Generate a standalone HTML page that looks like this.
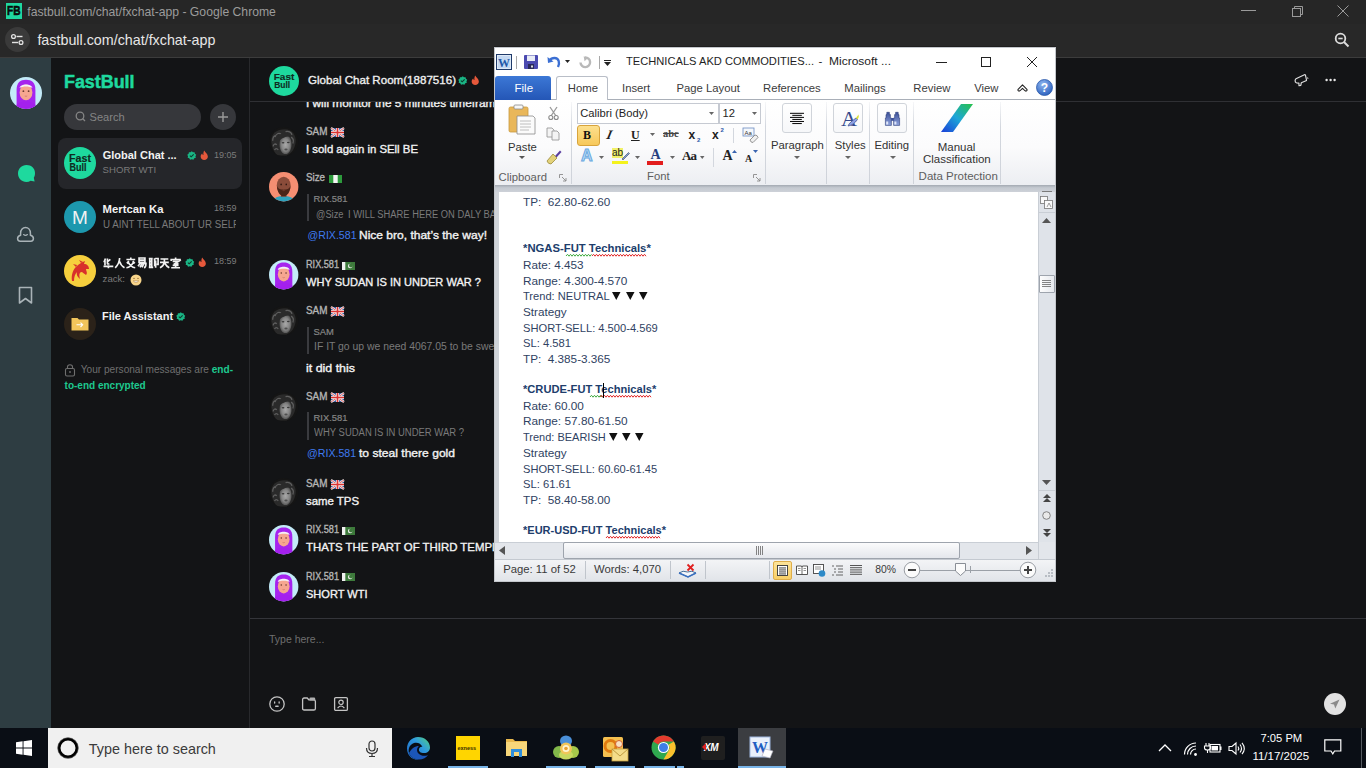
<!DOCTYPE html>
<html><head><meta charset="utf-8">
<style>
*{margin:0;padding:0;box-sizing:border-box}
html,body{width:1366px;height:768px;overflow:hidden;background:#131416;font-family:"Liberation Sans",sans-serif}
.a{position:absolute}
.t{position:absolute;white-space:nowrap;line-height:1}
svg.a{overflow:visible}
</style></head><body>
<div class="a" style="left:0px;top:0px;width:1366px;height:24px;background:#262626;"></div>
<div class="a" style="left:0px;top:24px;width:1366px;height:33px;background:#282828;"></div>
<div class="a" style="left:0px;top:57px;width:1366px;height:1px;background:#3c3c3c;"></div>
<div class="a" style="left:6px;top:3px;width:16px;height:16px;background:#1fd8a0;"></div>
<div class="t" style="left:7.00px;top:4.38px;font-size:13.5px;color:#0a0a0a;font-weight:bold;-webkit-text-stroke:0.6px #0a0a0a;transform:scaleX(0.7500);transform-origin:0 0;">FB</div>
<div class="t" style="left:27.30px;top:5.84px;font-size:12.2px;color:#9c9c9c;">fastbull.com/chat/fxchat-app - Google Chrome</div>
<div class="a" style="left:1241px;top:10px;width:15px;height:1px;background:#9a9a9a;"></div>
<svg class="a" style="left:1290px;top:4px;" width="14" height="14" viewBox="0 0 14 14"><rect x="2.5" y="4.5" width="8" height="8" fill="none" stroke="#9a9a9a"/><path d="M4.5 4.5 V2.5 H12.5 V10.5 H10.5" fill="none" stroke="#9a9a9a"/></svg>
<svg class="a" style="left:1336px;top:4px;" width="14" height="14" viewBox="0 0 14 14"><path d="M1.5 1.5 L12.5 12.5 M12.5 1.5 L1.5 12.5" stroke="#9a9a9a" stroke-width="1"/></svg>
<svg class="a" style="left:5px;top:27px;" width="25" height="25" viewBox="0 0 25 25"><circle cx="12.5" cy="12.5" r="12.5" fill="#3a3a3a"/><circle cx="8.5" cy="9.5" r="1.9" fill="none" stroke="#e3e3e3" stroke-width="1.3"/><path d="M11.5 9.5 H17.5" stroke="#e3e3e3" stroke-width="1.4"/><circle cx="16" cy="15.5" r="1.9" fill="none" stroke="#e3e3e3" stroke-width="1.3"/><path d="M7 15.5 H13" stroke="#e3e3e3" stroke-width="1.4"/></svg>
<div class="t" style="left:37.40px;top:33.28px;font-size:14.3px;color:#e6e6e6;">fastbull.com/chat/fxchat-app</div>
<svg class="a" style="left:1334px;top:32px;" width="16" height="16" viewBox="0 0 16 16"><circle cx="6.5" cy="6.5" r="4.8" fill="none" stroke="#dcdcdc" stroke-width="1.8"/><path d="M4.3 6.5 H8.7" stroke="#dcdcdc" stroke-width="1.6"/><path d="M10 10 L14.5 14.5" stroke="#dcdcdc" stroke-width="2"/></svg>
<div class="a" style="left:0px;top:58px;width:51px;height:670px;background:#2e3d42;"></div>
<svg class="a" style="left:10px;top:77px;" width="32" height="32" viewBox="0 0 32 32"><defs><clipPath id="cr"><circle cx="16" cy="16" r="16"/></clipPath></defs><circle cx="16" cy="16" r="16" fill="#c3ebf8"/><g clip-path="url(#cr)"><path d="M6.6 31 V13 C6.6 5.5 10.2 2.8 16 2.8 C21.8 2.8 25.4 5.5 25.4 13 V31 Z" fill="#a624ee"/><path d="M5 33 C5.5 27 9 24.5 16 24.5 C23 24.5 26.5 27 27 33 Z" fill="#a420ee"/><ellipse cx="16" cy="15.4" rx="6.4" ry="7.9" fill="#f6a690"/><path d="M9.6 11 C9.8 6.3 22.2 6.3 22.4 11 C19 9 13 9 9.6 11Z" fill="#f5eff5"/><circle cx="13.4" cy="14.2" r="0.9" fill="#6b3b30"/><circle cx="18.6" cy="14.2" r="0.9" fill="#6b3b30"/><path d="M14.8 19 Q16 19.6 17.2 19" stroke="#c06a5a" stroke-width="0.6" fill="none"/></g></svg>
<svg class="a" style="left:17px;top:164px;" width="19" height="19" viewBox="0 0 19 19"><path d="M9.5 1 C14.5 1 18 4.5 18 9 C18 11 17.6 12.5 16.8 13.8 L17.6 17.6 L13.6 16.8 C12.4 17.6 11 18 9.5 18 C4.5 18 1 14 1 9.5 C1 4.8 4.5 1 9.5 1Z" fill="#1ed99e"/></svg>
<svg class="a" style="left:16px;top:225px;" width="19" height="19" viewBox="0 0 19 19"><path d="M4.6 10.2 V8.2 C4.6 4.6 6.9 2.6 9.5 2.6 C12.1 2.6 14.4 4.6 14.4 8.2 V10.2 C16.4 10.6 17.4 12 17.4 13.6 C17.4 15.2 16.3 16.2 14.8 16.2 H4.2 C2.7 16.2 1.6 15.2 1.6 13.6 C1.6 12 2.6 10.6 4.6 10.2Z" fill="none" stroke="#a9b3b7" stroke-width="1.5" stroke-linejoin="round"/><path d="M7.6 9.6 Q9.5 11 11.4 9.6" fill="none" stroke="#a9b3b7" stroke-width="1.3" stroke-linecap="round"/></svg>
<svg class="a" style="left:17px;top:286px;" width="17" height="19" viewBox="0 0 17 19"><path d="M2.5 1.5 H14.5 V17 L8.5 12.5 L2.5 17 Z" fill="none" stroke="#a9b3b7" stroke-width="1.6" stroke-linejoin="round"/></svg>
<div class="a" style="left:51px;top:58px;width:198px;height:670px;background:#131416;"></div>
<div class="a" style="left:249px;top:58px;width:1px;height:670px;background:#28292c;"></div>
<div class="t" style="left:64.20px;top:74.19px;font-size:17.6px;color:#1ed99e;font-weight:bold;-webkit-text-stroke:0.5px #1ed99e;transform:scaleX(1.0158);transform-origin:0 0;">FastBull</div>
<div class="a" style="left:64px;top:104px;width:137px;height:26px;background:#36373b;border-radius:13px;"></div>
<svg class="a" style="left:75px;top:111px;" width="12" height="12" viewBox="0 0 12 12"><circle cx="5" cy="5" r="3.8" fill="none" stroke="#858585" stroke-width="1.3"/><path d="M7.8 7.8 L10 10" stroke="#858585" stroke-width="1.3"/></svg>
<div class="t" style="left:89.50px;top:111.67px;font-size:11.1px;color:#858585;">Search</div>
<div class="a" style="left:210px;top:104px;width:26px;height:26px;background:#36373b;border-radius:13px;"></div>
<svg class="a" style="left:216px;top:110px;" width="14" height="14" viewBox="0 0 14 14"><path d="M7 2 V12 M2 7 H12" stroke="#9a9a9a" stroke-width="1.4"/></svg>
<div class="a" style="left:58px;top:138px;width:184px;height:51px;background:#25262a;border-radius:8px;"></div>
<svg class="a" style="left:64px;top:147px;" width="32" height="32" viewBox="0 0 32 32"><circle cx="16" cy="16" r="16" fill="#1ed99e"/><text x="5" y="15.2" font-family="Liberation Sans" font-weight="bold" font-size="10.5" fill="#0f2a1f" textLength="22" lengthAdjust="spacingAndGlyphs" stroke="#0f2a1f" stroke-width="0.15">Fast</text><text x="5.5" y="23.8" font-family="Liberation Sans" font-weight="bold" font-size="10.5" fill="#0f2a1f" textLength="17" lengthAdjust="spacingAndGlyphs" stroke="#0f2a1f" stroke-width="0.15">Bull</text></svg>
<div class="t" style="left:102.70px;top:149.68px;font-size:11px;color:#f2f2f2;font-weight:bold;">Global Chat ...</div>
<svg class="a" style="left:187px;top:150.5px;" width="9.5" height="9.5" viewBox="0 0 10 10"><path d="M5 0.3 L6.3 1.4 L8 1.2 L8.3 2.9 L9.7 4 L8.9 5.5 L9.3 7.2 L7.6 7.6 L6.8 9.2 L5 8.6 L3.2 9.2 L2.4 7.6 L0.7 7.2 L1.1 5.5 L0.3 4 L1.7 2.9 L2 1.2 L3.7 1.4Z" fill="#1ab585"/><path d="M3 4.9 L4.4 6.2 L7 3.5" stroke="#0c3a2a" stroke-width="1.1" fill="none"/></svg>
<svg class="a" style="left:199.5px;top:150px;" width="8.5" height="10" viewBox="0 0 8 10"><path d="M4 0.5 C5 2.5 7.6 3.8 7.6 6.6 C7.6 8.6 6 10 4 10 C2 10 0.4 8.6 0.4 6.6 C0.4 5 1.2 4 2 3.4 C2.2 4.6 2.8 5 3.2 5 C3 3.5 3.2 1.8 4 0.5Z" fill="#e6583b"/></svg>
<div class="t" style="left:214.00px;top:150.92px;font-size:9px;color:#7c7c7c;">19:05</div>
<div class="t" style="left:102.60px;top:165.45px;font-size:9.6px;color:#7a7a7a;">SHORT WTI</div>
<svg class="a" style="left:64px;top:201px;" width="32" height="32" viewBox="0 0 32 32"><circle cx="16" cy="16" r="16" fill="#1d98ae"/><text x="16" y="23" text-anchor="middle" font-family="Liberation Sans" font-size="19" fill="#f2f2f2">M</text></svg>
<div class="t" style="left:102.60px;top:204.04px;font-size:11.3px;color:#f2f2f2;font-weight:bold;">Mertcan Ka</div>
<div class="t" style="left:214.00px;top:203.62px;font-size:9px;color:#7c7c7c;">18:59</div>
<div class="a" style="left:102px;top:218px;width:134px;height:14px;overflow:hidden"><div class="t" style="left:0.60px;top:1.60px;font-size:10px;color:#7a7a7a;transform:scaleX(0.9736);transform-origin:0 0;">U AINT TELL ABOUT UR SELF</div>
</div>
<svg class="a" style="left:64px;top:255px;" width="32" height="32" viewBox="0 0 32 32"><circle cx="16" cy="16" r="16" fill="#f6cf3d"/><path d="M8 26 C7 20 9 14 13 11 C15 9 18 7 21 6 L20 9 C23 9 25 11 25 14 L22 14 C22 16 24 18 22 20 C20 19 19 17 17 17 C15 18 15 21 16 24 C14 22 12 20 13 17 C11 19 10 22 10 26Z" fill="#d8312b"/><path d="M12 12 L9 9 L13 10Z M17 8 L15 5 L19 7Z" fill="#d8312b"/></svg>
<svg class="a" style="left:102.5px;top:257px;" width="86" height="12" viewBox="0 0 86 12"><path transform="translate(0.5,0.5) scale(0.98)" d="M2 1 L0.5 5 M1.5 3 V8 M4 1 V6 Q4 7 6 6.5 M7 2 L4.5 4 M0 9 H10 M5 8 V11" fill="none" stroke="#f2f2f2" stroke-width="1.7"/><path transform="translate(11.7,0.5) scale(0.98)" d="M5 0.5 Q5 6 0.5 10.5 M5 4 Q6 8 10 10.5" fill="none" stroke="#f2f2f2" stroke-width="1.7"/><path transform="translate(22.9,0.5) scale(0.98)" d="M5 0 V1.5 M0.5 2 H9.5 M3 3.5 L1 6 M7 3.5 L9 6 M2.5 5 Q5 10 9.5 10.5 M7.5 5 Q5 10 0.5 10.5" fill="none" stroke="#f2f2f2" stroke-width="1.7"/><path transform="translate(34.099999999999994,0.5) scale(0.98)" d="M2 0.5 H8 V5 H2Z M2 2.7 H8 M3 6 H9 Q9 10 7 10.5 M3 6 L1 9 M5 6 L3 10 M7 6 L5 10" fill="none" stroke="#f2f2f2" stroke-width="1.7"/><path transform="translate(45.3,0.5) scale(0.98)" d="M0.5 1 H4.5 M1.5 1 V10 M3.5 1 V10 M0.5 10 H5 M1.5 4 H3.5 M1.5 7 H3.5 M5.5 1.5 L6.5 1.5 V9 M7 1 H10 V7 H8.5 M7.5 3 V10.5" fill="none" stroke="#f2f2f2" stroke-width="1.7"/><path transform="translate(56.5,0.5) scale(0.98)" d="M1 1.5 H9 M0.5 5 H9.5 M5 1.5 V5 Q4 9 0.5 10.5 M5.5 6 Q7 9 10 10.5" fill="none" stroke="#f2f2f2" stroke-width="1.7"/><path transform="translate(67.69999999999999,0.5) scale(0.98)" d="M5 0 V1.5 M0.5 3.5 V2 H9.5 V3.5 M2 4 H8 L3 7 M6 6 L8 7 M2 8 H8 M5 6.5 V10.5 M0.5 10.5 H9.5" fill="none" stroke="#f2f2f2" stroke-width="1.7"/></svg>
<svg class="a" style="left:185px;top:257.5px;" width="9.5" height="9.5" viewBox="0 0 10 10"><path d="M5 0.3 L6.3 1.4 L8 1.2 L8.3 2.9 L9.7 4 L8.9 5.5 L9.3 7.2 L7.6 7.6 L6.8 9.2 L5 8.6 L3.2 9.2 L2.4 7.6 L0.7 7.2 L1.1 5.5 L0.3 4 L1.7 2.9 L2 1.2 L3.7 1.4Z" fill="#1ab585"/><path d="M3 4.9 L4.4 6.2 L7 3.5" stroke="#0c3a2a" stroke-width="1.1" fill="none"/></svg>
<svg class="a" style="left:197.5px;top:257px;" width="8.5" height="10" viewBox="0 0 8 10"><path d="M4 0.5 C5 2.5 7.6 3.8 7.6 6.6 C7.6 8.6 6 10 4 10 C2 10 0.4 8.6 0.4 6.6 C0.4 5 1.2 4 2 3.4 C2.2 4.6 2.8 5 3.2 5 C3 3.5 3.2 1.8 4 0.5Z" fill="#e6583b"/></svg>
<div class="t" style="left:214.00px;top:257.42px;font-size:9px;color:#7c7c7c;">18:59</div>
<div class="t" style="left:102.60px;top:274.35px;font-size:9.6px;color:#7a7a7a;">zack:</div>
<svg class="a" style="left:129.5px;top:273.5px;" width="12" height="12" viewBox="0 0 12 12"><circle cx="6" cy="6" r="5.5" fill="#f7d48a"/><path d="M3.3 6.8 Q6 10 8.7 6.8Z" fill="#fff" stroke="#9a6a2a" stroke-width="0.5"/><path d="M3.2 4.6 Q4 3.6 4.8 4.6 M7.2 4.6 Q8 3.6 8.8 4.6" stroke="#7a5020" stroke-width="0.7" fill="none"/></svg>
<svg class="a" style="left:64px;top:308px;" width="32" height="32" viewBox="0 0 32 32"><circle cx="16" cy="16" r="16" fill="#2b2219"/><path d="M7.5 10 h6 l1.5 1.6 H24.5 v11 H7.5Z" fill="#f2c55b"/><path d="M12.5 16.8 h6 M16.5 14.6 l2.2 2.2 l-2.2 2.2" stroke="#fff" stroke-width="1.1" fill="none"/></svg>
<div class="t" style="left:102.00px;top:310.68px;font-size:11px;color:#f2f2f2;font-weight:bold;">File Assistant</div>
<svg class="a" style="left:175.5px;top:312px;" width="9.5" height="9.5" viewBox="0 0 10 10"><path d="M5 0.3 L6.3 1.4 L8 1.2 L8.3 2.9 L9.7 4 L8.9 5.5 L9.3 7.2 L7.6 7.6 L6.8 9.2 L5 8.6 L3.2 9.2 L2.4 7.6 L0.7 7.2 L1.1 5.5 L0.3 4 L1.7 2.9 L2 1.2 L3.7 1.4Z" fill="#1ab585"/><path d="M3 4.9 L4.4 6.2 L7 3.5" stroke="#0c3a2a" stroke-width="1.1" fill="none"/></svg>
<svg class="a" style="left:64px;top:363px;" width="12" height="14" viewBox="0 0 12 14"><rect x="1.5" y="5.5" width="9" height="7.5" rx="1.5" fill="none" stroke="#6f6f6f" stroke-width="1.1"/><path d="M3.5 5.5 V3.8 C3.5 1 8.5 1 8.5 3.8 V5.5" fill="none" stroke="#6f6f6f" stroke-width="1.1"/><circle cx="6" cy="9" r="0.9" fill="#6f6f6f"/></svg>
<div class="t" style="left:80.80px;top:364.79px;font-size:10.1px;color:#6f6f6f;">Your personal messages are <b style="color:#1ec98f">end-</b></div>
<div class="t" style="left:64.60px;top:380.80px;font-size:10px;color:#1ec98f;font-weight:bold;">to-end encrypted</div>
<div class="a" style="left:250px;top:58px;width:1116px;height:670px;background:#131416;"></div>
<div class="a" style="left:250px;top:101px;width:1116px;height:1px;background:#2f3034;"></div>
<div class="a" style="left:250px;top:618px;width:1116px;height:1px;background:#34353a;"></div>
<svg class="a" style="left:269px;top:66px;" width="30" height="30" viewBox="0 0 32 32"><circle cx="16" cy="16" r="16" fill="#1ed99e"/><text x="5" y="15.2" font-family="Liberation Sans" font-weight="bold" font-size="10.5" fill="#0f2a1f" textLength="22" lengthAdjust="spacingAndGlyphs" stroke="#0f2a1f" stroke-width="0.15">Fast</text><text x="5.5" y="23.8" font-family="Liberation Sans" font-weight="bold" font-size="10.5" fill="#0f2a1f" textLength="17" lengthAdjust="spacingAndGlyphs" stroke="#0f2a1f" stroke-width="0.15">Bull</text></svg>
<div class="t" style="left:307.50px;top:74.86px;font-size:11.2px;color:#eeeeee;-webkit-text-stroke:0.35px #eeeeee;transform:scaleX(1.0346);transform-origin:0 0;">Global Chat Room(1887516)</div>
<svg class="a" style="left:458px;top:75.5px;" width="9.5" height="9.5" viewBox="0 0 10 10"><path d="M5 0.3 L6.3 1.4 L8 1.2 L8.3 2.9 L9.7 4 L8.9 5.5 L9.3 7.2 L7.6 7.6 L6.8 9.2 L5 8.6 L3.2 9.2 L2.4 7.6 L0.7 7.2 L1.1 5.5 L0.3 4 L1.7 2.9 L2 1.2 L3.7 1.4Z" fill="#1ab585"/><path d="M3 4.9 L4.4 6.2 L7 3.5" stroke="#0c3a2a" stroke-width="1.1" fill="none"/></svg>
<svg class="a" style="left:470.5px;top:75px;" width="8.5" height="10" viewBox="0 0 8 10"><path d="M4 0.5 C5 2.5 7.6 3.8 7.6 6.6 C7.6 8.6 6 10 4 10 C2 10 0.4 8.6 0.4 6.6 C0.4 5 1.2 4 2 3.4 C2.2 4.6 2.8 5 3.2 5 C3 3.5 3.2 1.8 4 0.5Z" fill="#e6583b"/></svg>
<svg class="a" style="left:1293px;top:73px;" width="17" height="15" viewBox="0 0 17 15"><path d="M3 5.8 L11.4 1.8 Q12.3 1.5 12.5 2.3 L13.5 7 Q13.6 7.6 13 7.8 L8.3 9.8 L7.8 12.4 L6 12.6 L5.9 10.2 L3.7 10 Q2 9.6 2.1 7.8 Q2.2 6.3 3 5.8Z" fill="none" stroke="#dedede" stroke-width="1.2" stroke-linejoin="round"/><path d="M14.2 4.3 L15.2 5.8" stroke="#9a9a9a" stroke-width="1.2"/></svg>
<svg class="a" style="left:1325px;top:78px;" width="12" height="4" viewBox="0 0 12 4"><circle cx="1.6" cy="2" r="1.2" fill="#e6e6e6"/><circle cx="5.6" cy="2" r="1.2" fill="#e6e6e6"/><circle cx="9.6" cy="2" r="1.2" fill="#e6e6e6"/></svg>
<div class="a" style="left:250px;top:102px;width:1116px;height:516px;overflow:hidden"><div class="t" style="left:55.70px;top:-4.42px;font-size:11px;color:#f0f0f0;-webkit-text-stroke:0.35px #f2f2f2;transform:scaleX(1.0759);transform-origin:0 0;">I will monitor the 5 minutes timeframe</div>
<svg class="a" style="left:19px;top:24.599999999999994px;" width="29.4" height="29.4" viewBox="0 0 32 32"><defs><clipPath id="cs"><circle cx="16" cy="16" r="16"/></clipPath><radialGradient id="gs" cx="0.5" cy="0.5" r="0.55"><stop offset="0" stop-color="#a8a8a8"/><stop offset="0.6" stop-color="#858585"/><stop offset="1" stop-color="#4a4a4a"/></radialGradient></defs><g clip-path="url(#cs)"><rect width="32" height="32" fill="#151515"/><path d="M2.5 16 C2 7 9 2.5 17 2.5 C25 2.5 30 9 29 17 C28 24 24.5 29 19 31 L9 31 C5 27 3 22 2.5 16Z" fill="#2a2a2a"/><path d="M4 15 C4 11 6 9 8 9.5 M4.5 21 C5 18 7 18 8.5 19.5 M6.5 11 C8 6.5 11.5 6 13 8 M18 5 C21 4 24.5 5.5 25 8.5 M24 11 C26 12 27 15 26 18 M6 25 C7 23 9 23 10 25" fill="none" stroke="#5e5e5e" stroke-width="1.4"/><path d="M11.5 19 C11.5 12.5 14 9.5 18 9.5 C22.5 9.5 24.5 13 24.5 19 C24.5 25 21.5 29.5 18 29.5 C14.5 29.5 11.5 25.5 11.5 19Z" fill="url(#gs)"/><path d="M10.5 9 C13 6.5 20 6 24 10 C21 9.8 16 10.5 11.5 14.5Z" fill="#2a2a2a"/><ellipse cx="15.3" cy="17.2" rx="1.5" ry="0.8" fill="#3a3a3a"/><ellipse cx="21" cy="16.8" rx="1.5" ry="0.8" fill="#3a3a3a"/><ellipse cx="18.5" cy="24.5" rx="1.8" ry="1" fill="#4f4f4f"/></g></svg>
<div class="t" style="left:55.70px;top:25.40px;font-size:10px;color:#b4b4b4;-webkit-text-stroke:0.35px #b4b4b4;transform:scaleX(0.9875);transform-origin:0 0;">SAM</div>
<svg class="a" style="left:80.5px;top:26.099999999999994px;" width="13" height="9" viewBox="0 0 13 9"><rect width="13" height="9" fill="#3a5ba3"/><path d="M0 0 L13 9 M13 0 L0 9" stroke="#eee" stroke-width="2.2"/><path d="M0 0 L13 9 M13 0 L0 9" stroke="#d44" stroke-width="0.8"/><path d="M6.5 0 V9 M0 4.5 H13" stroke="#eee" stroke-width="3"/><path d="M6.5 0 V9 M0 4.5 H13" stroke="#d33" stroke-width="1.6"/></svg>
<div class="t" style="left:55.70px;top:41.98px;font-size:11px;color:#f2f2f2;-webkit-text-stroke:0.35px #f2f2f2;transform:scaleX(1.0348);transform-origin:0 0;">I sold again in SEll BE</div>
<svg class="a" style="left:19px;top:70.19999999999999px;" width="29.4" height="29.4" viewBox="0 0 32 32"><defs><clipPath id="cz"><circle cx="16" cy="16" r="16"/></clipPath></defs><circle cx="16" cy="16" r="16" fill="#f58e72"/><g clip-path="url(#cz)"><path d="M4 33 C5 27.5 10 26 16 26 C22 26 27 27.5 28 33Z" fill="#2fa2bd"/><rect x="13" y="22" width="6" height="5" fill="#7a4030"/><ellipse cx="16" cy="14.8" rx="7.6" ry="9.6" fill="#8a4c3a"/><path d="M8.6 15 C9 22.5 12 26.2 16 26.2 C20 26.2 23 22.5 23.4 15 C22 18.8 19.5 19.2 16 19.2 C12.5 19.2 10 18.8 8.6 15Z" fill="#4a2418"/><path d="M14 20.2 Q16 19.2 18 20.2 Q16 21.5 14 20.2Z" fill="#6a3628"/><ellipse cx="13.2" cy="13.5" rx="0.8" ry="1" fill="#2a1510"/><ellipse cx="18.8" cy="13.5" rx="0.8" ry="1" fill="#2a1510"/></g></svg>
<div class="t" style="left:55.70px;top:71.40px;font-size:10px;color:#b4b4b4;-webkit-text-stroke:0.35px #b4b4b4;transform:scaleX(0.9767);transform-origin:0 0;">Size</div>
<svg class="a" style="left:78.5px;top:72.6px;" width="13" height="8" viewBox="0 0 13 8"><rect width="13" height="8" fill="#2d9a3c"/><rect x="4.3" width="4.4" height="8" fill="#f5f5f5"/></svg>
<div class="a" style="left:57px;top:91.6px;width:1.5px;height:27px;background:#3a3b3f;"></div>
<div class="t" style="left:63.60px;top:92.47px;font-size:9.4px;color:#858585;-webkit-text-stroke:0.2px #858585;">RIX.581</div>
<div class="t" style="left:65.80px;top:108.40px;font-size:10px;color:#7a7a7a;transform:scaleX(0.9260);transform-origin:0 0;">@Size</div>
<div class="t" style="left:97.60px;top:108.40px;font-size:10px;color:#7a7a7a;transform:scaleX(0.9360);transform-origin:0 0;">I WILL SHARE HERE ON DALY BASIS</div>
<div class="t" style="left:57.50px;top:128.33px;font-size:10.6px;color:#3f7bf0;">@RIX.581</div>
<div class="t" style="left:108.50px;top:128.28px;font-size:11px;color:#f2f2f2;-webkit-text-stroke:0.35px #f2f2f2;transform:scaleX(1.0923);transform-origin:0 0;">Nice bro, that’s the way!</div>
<svg class="a" style="left:19px;top:157.6px;" width="29.4" height="29.4" viewBox="0 0 32 32"><defs><clipPath id="cr"><circle cx="16" cy="16" r="16"/></clipPath></defs><circle cx="16" cy="16" r="16" fill="#c3ebf8"/><g clip-path="url(#cr)"><path d="M6.6 31 V13 C6.6 5.5 10.2 2.8 16 2.8 C21.8 2.8 25.4 5.5 25.4 13 V31 Z" fill="#a624ee"/><path d="M5 33 C5.5 27 9 24.5 16 24.5 C23 24.5 26.5 27 27 33 Z" fill="#a420ee"/><ellipse cx="16" cy="15.4" rx="6.4" ry="7.9" fill="#f6a690"/><path d="M9.6 11 C9.8 6.3 22.2 6.3 22.4 11 C19 9 13 9 9.6 11Z" fill="#f5eff5"/><circle cx="13.4" cy="14.2" r="0.9" fill="#6b3b30"/><circle cx="18.6" cy="14.2" r="0.9" fill="#6b3b30"/><path d="M14.8 19 Q16 19.6 17.2 19" stroke="#c06a5a" stroke-width="0.6" fill="none"/></g></svg>
<div class="t" style="left:55.70px;top:158.40px;font-size:10px;color:#b4b4b4;-webkit-text-stroke:0.35px #b4b4b4;transform:scaleX(0.9131);transform-origin:0 0;">RIX.581</div>
<svg class="a" style="left:92px;top:159.6px;" width="13" height="8" viewBox="0 0 13 8"><rect width="13" height="8" fill="#3d7a3b"/><rect width="3.3" height="8" fill="#f0f0f0"/><circle cx="8.2" cy="4" r="2.3" fill="#f0f0f0"/><circle cx="9" cy="3.5" r="2" fill="#3d7a3b"/></svg>
<div class="t" style="left:55.70px;top:174.98px;font-size:11px;color:#f2f2f2;-webkit-text-stroke:0.35px #f2f2f2;transform:scaleX(1.0047);transform-origin:0 0;">WHY SUDAN IS IN UNDER WAR ?</div>
<svg class="a" style="left:19px;top:203.6px;" width="29.4" height="29.4" viewBox="0 0 32 32"><defs><clipPath id="cs"><circle cx="16" cy="16" r="16"/></clipPath><radialGradient id="gs" cx="0.5" cy="0.5" r="0.55"><stop offset="0" stop-color="#a8a8a8"/><stop offset="0.6" stop-color="#858585"/><stop offset="1" stop-color="#4a4a4a"/></radialGradient></defs><g clip-path="url(#cs)"><rect width="32" height="32" fill="#151515"/><path d="M2.5 16 C2 7 9 2.5 17 2.5 C25 2.5 30 9 29 17 C28 24 24.5 29 19 31 L9 31 C5 27 3 22 2.5 16Z" fill="#2a2a2a"/><path d="M4 15 C4 11 6 9 8 9.5 M4.5 21 C5 18 7 18 8.5 19.5 M6.5 11 C8 6.5 11.5 6 13 8 M18 5 C21 4 24.5 5.5 25 8.5 M24 11 C26 12 27 15 26 18 M6 25 C7 23 9 23 10 25" fill="none" stroke="#5e5e5e" stroke-width="1.4"/><path d="M11.5 19 C11.5 12.5 14 9.5 18 9.5 C22.5 9.5 24.5 13 24.5 19 C24.5 25 21.5 29.5 18 29.5 C14.5 29.5 11.5 25.5 11.5 19Z" fill="url(#gs)"/><path d="M10.5 9 C13 6.5 20 6 24 10 C21 9.8 16 10.5 11.5 14.5Z" fill="#2a2a2a"/><ellipse cx="15.3" cy="17.2" rx="1.5" ry="0.8" fill="#3a3a3a"/><ellipse cx="21" cy="16.8" rx="1.5" ry="0.8" fill="#3a3a3a"/><ellipse cx="18.5" cy="24.5" rx="1.8" ry="1" fill="#4f4f4f"/></g></svg>
<div class="t" style="left:55.70px;top:204.40px;font-size:10px;color:#b4b4b4;-webkit-text-stroke:0.35px #b4b4b4;transform:scaleX(0.9875);transform-origin:0 0;">SAM</div>
<svg class="a" style="left:80.5px;top:205.1px;" width="13" height="9" viewBox="0 0 13 9"><rect width="13" height="9" fill="#3a5ba3"/><path d="M0 0 L13 9 M13 0 L0 9" stroke="#eee" stroke-width="2.2"/><path d="M0 0 L13 9 M13 0 L0 9" stroke="#d44" stroke-width="0.8"/><path d="M6.5 0 V9 M0 4.5 H13" stroke="#eee" stroke-width="3"/><path d="M6.5 0 V9 M0 4.5 H13" stroke="#d33" stroke-width="1.6"/></svg>
<div class="a" style="left:57px;top:224.6px;width:1.5px;height:27px;background:#3a3b3f;"></div>
<div class="t" style="left:63.60px;top:224.97px;font-size:9.4px;color:#858585;-webkit-text-stroke:0.2px #858585;">SAM</div>
<div class="t" style="left:63.80px;top:240.40px;font-size:10px;color:#7a7a7a;transform:scaleX(1.0400);transform-origin:0 0;">IF IT go up we need 4067.05 to be swept</div>
<div class="t" style="left:55.70px;top:261.28px;font-size:11px;color:#f2f2f2;-webkit-text-stroke:0.35px #f2f2f2;transform:scaleX(1.1285);transform-origin:0 0;">it did this</div>
<svg class="a" style="left:19px;top:289.6px;" width="29.4" height="29.4" viewBox="0 0 32 32"><defs><clipPath id="cs"><circle cx="16" cy="16" r="16"/></clipPath><radialGradient id="gs" cx="0.5" cy="0.5" r="0.55"><stop offset="0" stop-color="#a8a8a8"/><stop offset="0.6" stop-color="#858585"/><stop offset="1" stop-color="#4a4a4a"/></radialGradient></defs><g clip-path="url(#cs)"><rect width="32" height="32" fill="#151515"/><path d="M2.5 16 C2 7 9 2.5 17 2.5 C25 2.5 30 9 29 17 C28 24 24.5 29 19 31 L9 31 C5 27 3 22 2.5 16Z" fill="#2a2a2a"/><path d="M4 15 C4 11 6 9 8 9.5 M4.5 21 C5 18 7 18 8.5 19.5 M6.5 11 C8 6.5 11.5 6 13 8 M18 5 C21 4 24.5 5.5 25 8.5 M24 11 C26 12 27 15 26 18 M6 25 C7 23 9 23 10 25" fill="none" stroke="#5e5e5e" stroke-width="1.4"/><path d="M11.5 19 C11.5 12.5 14 9.5 18 9.5 C22.5 9.5 24.5 13 24.5 19 C24.5 25 21.5 29.5 18 29.5 C14.5 29.5 11.5 25.5 11.5 19Z" fill="url(#gs)"/><path d="M10.5 9 C13 6.5 20 6 24 10 C21 9.8 16 10.5 11.5 14.5Z" fill="#2a2a2a"/><ellipse cx="15.3" cy="17.2" rx="1.5" ry="0.8" fill="#3a3a3a"/><ellipse cx="21" cy="16.8" rx="1.5" ry="0.8" fill="#3a3a3a"/><ellipse cx="18.5" cy="24.5" rx="1.8" ry="1" fill="#4f4f4f"/></g></svg>
<div class="t" style="left:55.70px;top:290.40px;font-size:10px;color:#b4b4b4;-webkit-text-stroke:0.35px #b4b4b4;transform:scaleX(0.9875);transform-origin:0 0;">SAM</div>
<svg class="a" style="left:80.5px;top:291.1px;" width="13" height="9" viewBox="0 0 13 9"><rect width="13" height="9" fill="#3a5ba3"/><path d="M0 0 L13 9 M13 0 L0 9" stroke="#eee" stroke-width="2.2"/><path d="M0 0 L13 9 M13 0 L0 9" stroke="#d44" stroke-width="0.8"/><path d="M6.5 0 V9 M0 4.5 H13" stroke="#eee" stroke-width="3"/><path d="M6.5 0 V9 M0 4.5 H13" stroke="#d33" stroke-width="1.6"/></svg>
<div class="a" style="left:57px;top:309.6px;width:1.5px;height:28px;background:#3a3b3f;"></div>
<div class="t" style="left:63.60px;top:311.17px;font-size:9.4px;color:#858585;-webkit-text-stroke:0.2px #858585;">RIX.581</div>
<div class="t" style="left:63.80px;top:326.40px;font-size:10px;color:#7a7a7a;transform:scaleX(0.9472);transform-origin:0 0;">WHY SUDAN IS IN UNDER WAR ?</div>
<div class="t" style="left:57.30px;top:346.33px;font-size:10.6px;color:#3f7bf0;transform:scaleX(1.0031);transform-origin:0 0;">@RIX.581</div>
<div class="t" style="left:108.80px;top:346.28px;font-size:11px;color:#f2f2f2;-webkit-text-stroke:0.35px #f2f2f2;transform:scaleX(1.0977);transform-origin:0 0;">to steal there gold</div>
<svg class="a" style="left:19px;top:375.6px;" width="29.4" height="29.4" viewBox="0 0 32 32"><defs><clipPath id="cs"><circle cx="16" cy="16" r="16"/></clipPath><radialGradient id="gs" cx="0.5" cy="0.5" r="0.55"><stop offset="0" stop-color="#a8a8a8"/><stop offset="0.6" stop-color="#858585"/><stop offset="1" stop-color="#4a4a4a"/></radialGradient></defs><g clip-path="url(#cs)"><rect width="32" height="32" fill="#151515"/><path d="M2.5 16 C2 7 9 2.5 17 2.5 C25 2.5 30 9 29 17 C28 24 24.5 29 19 31 L9 31 C5 27 3 22 2.5 16Z" fill="#2a2a2a"/><path d="M4 15 C4 11 6 9 8 9.5 M4.5 21 C5 18 7 18 8.5 19.5 M6.5 11 C8 6.5 11.5 6 13 8 M18 5 C21 4 24.5 5.5 25 8.5 M24 11 C26 12 27 15 26 18 M6 25 C7 23 9 23 10 25" fill="none" stroke="#5e5e5e" stroke-width="1.4"/><path d="M11.5 19 C11.5 12.5 14 9.5 18 9.5 C22.5 9.5 24.5 13 24.5 19 C24.5 25 21.5 29.5 18 29.5 C14.5 29.5 11.5 25.5 11.5 19Z" fill="url(#gs)"/><path d="M10.5 9 C13 6.5 20 6 24 10 C21 9.8 16 10.5 11.5 14.5Z" fill="#2a2a2a"/><ellipse cx="15.3" cy="17.2" rx="1.5" ry="0.8" fill="#3a3a3a"/><ellipse cx="21" cy="16.8" rx="1.5" ry="0.8" fill="#3a3a3a"/><ellipse cx="18.5" cy="24.5" rx="1.8" ry="1" fill="#4f4f4f"/></g></svg>
<div class="t" style="left:55.70px;top:377.00px;font-size:10px;color:#b4b4b4;-webkit-text-stroke:0.35px #b4b4b4;transform:scaleX(0.9875);transform-origin:0 0;">SAM</div>
<svg class="a" style="left:80.5px;top:377.70000000000005px;" width="13" height="9" viewBox="0 0 13 9"><rect width="13" height="9" fill="#3a5ba3"/><path d="M0 0 L13 9 M13 0 L0 9" stroke="#eee" stroke-width="2.2"/><path d="M0 0 L13 9 M13 0 L0 9" stroke="#d44" stroke-width="0.8"/><path d="M6.5 0 V9 M0 4.5 H13" stroke="#eee" stroke-width="3"/><path d="M6.5 0 V9 M0 4.5 H13" stroke="#d33" stroke-width="1.6"/></svg>
<div class="t" style="left:55.80px;top:394.08px;font-size:11px;color:#f2f2f2;-webkit-text-stroke:0.35px #f2f2f2;transform:scaleX(1.0360);transform-origin:0 0;">same TPS</div>
<svg class="a" style="left:19px;top:422.6px;" width="29.4" height="29.4" viewBox="0 0 32 32"><defs><clipPath id="cr"><circle cx="16" cy="16" r="16"/></clipPath></defs><circle cx="16" cy="16" r="16" fill="#c3ebf8"/><g clip-path="url(#cr)"><path d="M6.6 31 V13 C6.6 5.5 10.2 2.8 16 2.8 C21.8 2.8 25.4 5.5 25.4 13 V31 Z" fill="#a624ee"/><path d="M5 33 C5.5 27 9 24.5 16 24.5 C23 24.5 26.5 27 27 33 Z" fill="#a420ee"/><ellipse cx="16" cy="15.4" rx="6.4" ry="7.9" fill="#f6a690"/><path d="M9.6 11 C9.8 6.3 22.2 6.3 22.4 11 C19 9 13 9 9.6 11Z" fill="#f5eff5"/><circle cx="13.4" cy="14.2" r="0.9" fill="#6b3b30"/><circle cx="18.6" cy="14.2" r="0.9" fill="#6b3b30"/><path d="M14.8 19 Q16 19.6 17.2 19" stroke="#c06a5a" stroke-width="0.6" fill="none"/></g></svg>
<div class="t" style="left:55.70px;top:423.40px;font-size:10px;color:#b4b4b4;-webkit-text-stroke:0.35px #b4b4b4;transform:scaleX(0.9131);transform-origin:0 0;">RIX.581</div>
<svg class="a" style="left:92px;top:424.6px;" width="13" height="8" viewBox="0 0 13 8"><rect width="13" height="8" fill="#3d7a3b"/><rect width="3.3" height="8" fill="#f0f0f0"/><circle cx="8.2" cy="4" r="2.3" fill="#f0f0f0"/><circle cx="9" cy="3.5" r="2" fill="#3d7a3b"/></svg>
<div class="t" style="left:55.80px;top:439.88px;font-size:11px;color:#f2f2f2;-webkit-text-stroke:0.35px #f2f2f2;transform:scaleX(1.0365);transform-origin:0 0;">THATS THE PART OF THIRD TEMPLE</div>
<svg class="a" style="left:19px;top:469.6px;" width="29.4" height="29.4" viewBox="0 0 32 32"><defs><clipPath id="cr"><circle cx="16" cy="16" r="16"/></clipPath></defs><circle cx="16" cy="16" r="16" fill="#c3ebf8"/><g clip-path="url(#cr)"><path d="M6.6 31 V13 C6.6 5.5 10.2 2.8 16 2.8 C21.8 2.8 25.4 5.5 25.4 13 V31 Z" fill="#a624ee"/><path d="M5 33 C5.5 27 9 24.5 16 24.5 C23 24.5 26.5 27 27 33 Z" fill="#a420ee"/><ellipse cx="16" cy="15.4" rx="6.4" ry="7.9" fill="#f6a690"/><path d="M9.6 11 C9.8 6.3 22.2 6.3 22.4 11 C19 9 13 9 9.6 11Z" fill="#f5eff5"/><circle cx="13.4" cy="14.2" r="0.9" fill="#6b3b30"/><circle cx="18.6" cy="14.2" r="0.9" fill="#6b3b30"/><path d="M14.8 19 Q16 19.6 17.2 19" stroke="#c06a5a" stroke-width="0.6" fill="none"/></g></svg>
<div class="t" style="left:55.70px;top:470.10px;font-size:10px;color:#b4b4b4;-webkit-text-stroke:0.35px #b4b4b4;transform:scaleX(0.9131);transform-origin:0 0;">RIX.581</div>
<svg class="a" style="left:92px;top:471.30000000000007px;" width="13" height="8" viewBox="0 0 13 8"><rect width="13" height="8" fill="#3d7a3b"/><rect width="3.3" height="8" fill="#f0f0f0"/><circle cx="8.2" cy="4" r="2.3" fill="#f0f0f0"/><circle cx="9" cy="3.5" r="2" fill="#3d7a3b"/></svg>
<div class="t" style="left:55.80px;top:486.88px;font-size:11px;color:#f2f2f2;-webkit-text-stroke:0.35px #f2f2f2;transform:scaleX(1.0044);transform-origin:0 0;">SHORT WTI</div>
</div>
<div class="t" style="left:269.00px;top:633.74px;font-size:10.5px;color:#6f6f6f;">Type here...</div>
<svg class="a" style="left:268px;top:695px;" width="18" height="18" viewBox="0 0 18 18"><circle cx="9" cy="9" r="7.2" fill="none" stroke="#c4c4c4" stroke-width="1.3"/><rect x="6" y="6.3" width="1.3" height="2.4" rx="0.6" fill="#c4c4c4"/><rect x="10.5" y="6.3" width="1.3" height="2.4" rx="0.6" fill="#c4c4c4"/><rect x="7" y="10.4" width="3.8" height="1.6" rx="0.8" fill="#c4c4c4"/></svg>
<svg class="a" style="left:301px;top:696px;" width="16" height="16" viewBox="0 0 16 16"><path d="M1.6 3.6 Q1.6 2 3.2 2 H6.2 L7.8 3.8 H12.8 Q14.4 3.8 14.4 5.4 V12.4 Q14.4 14 12.8 14 H3.2 Q1.6 14 1.6 12.4Z" fill="none" stroke="#c4c4c4" stroke-width="1.3"/><rect x="8.4" y="1.6" width="5.8" height="3" rx="1.2" fill="#b0b0b0"/></svg>
<svg class="a" style="left:333px;top:696px;" width="16" height="16" viewBox="0 0 16 16"><rect x="1.6" y="1.6" width="12.8" height="12.8" rx="1.2" fill="none" stroke="#c4c4c4" stroke-width="1.3"/><circle cx="8" cy="6.3" r="2.2" fill="none" stroke="#c4c4c4" stroke-width="1.2"/><path d="M4.6 12.2 Q8 7.8 11.4 12.2" fill="none" stroke="#c4c4c4" stroke-width="1.2"/></svg>
<svg class="a" style="left:1324px;top:693px;" width="22" height="22" viewBox="0 0 22 22"><circle cx="11" cy="11" r="11" fill="#e2e2e2"/><path d="M15.5 6.5 L6 10.8 L10 11.6 L11.3 15.6 Z" fill="#8a8a8a"/></svg>
<div class="a" style="left:494px;top:46px;width:562px;height:1px;background:#1e1e1e;"></div>
<div class="a" style="left:494px;top:47px;width:562px;height:535px;background:#ffffff;border:1px solid #c4c7cc;"></div>
<div class="a" style="left:495px;top:48px;width:560px;height:28px;background:#ffffff;"></div>
<svg class="a" style="left:496px;top:54px;" width="17" height="16" viewBox="0 0 17 16"><rect x="0.5" y="0.5" width="15" height="15" fill="#dfeaf7" stroke="#1f3a6a"/><rect x="2" y="2" width="12" height="12" fill="#c4d8f2"/><text x="8" y="12.5" text-anchor="middle" font-family="Liberation Serif" font-weight="bold" font-size="12" fill="#2258a8">W</text></svg>
<div class="a" style="left:516px;top:56px;width:1px;height:13px;background:#a8a8a8;"></div>
<svg class="a" style="left:524px;top:55px;" width="14" height="14" viewBox="0 0 14 14"><rect x="0" y="0" width="14" height="14" rx="1" fill="#4b4ab0"/><rect x="3" y="0.5" width="8" height="5.5" fill="#e8ecf6"/><rect x="4" y="9" width="6" height="5" fill="#2a2a5a"/><rect x="7" y="10.5" width="2" height="2" fill="#ddd"/></svg>
<svg class="a" style="left:547px;top:55px;" width="13" height="13" viewBox="0 0 13 13"><path d="M11 12 C13 8 12 3 7.5 3 C5 3 3.5 4 2.5 5.5" fill="none" stroke="#3b6fd3" stroke-width="2.4"/><path d="M0.5 2 L1 8 L6.5 6.5Z" fill="#3b6fd3"/></svg>
<svg class="a" style="left:565px;top:60px;" width="5" height="3" viewBox="0 0 5 3"><path d="M0 0 H5 L2.5 3Z" fill="#222"/></svg>
<svg class="a" style="left:579px;top:56px;" width="12" height="12" viewBox="0 0 12 12"><path d="M6 1.5 A4.8 4.8 0 1 1 1.5 6.5" fill="none" stroke="#b9b9b9" stroke-width="2.4"/><path d="M5 0 L9 2.5 L5 5Z" fill="#b9b9b9" transform="rotate(-10 6 2)"/></svg>
<div class="a" style="left:599px;top:56px;width:1px;height:13px;background:#a8a8a8;"></div>
<div class="a" style="left:604px;top:59.5px;width:7px;height:1.2px;background:#222;"></div>
<svg class="a" style="left:604px;top:62px;" width="7" height="4" viewBox="0 0 7 4"><path d="M0 0 H7 L3.5 4Z" fill="#222"/></svg>
<div class="t" style="left:625.60px;top:55.62px;font-size:11.5px;color:#1e1e1e;transform:scaleX(0.9678);transform-origin:0 0;">TECHNICALS AKD COMMODITIES...</div>
<div class="t" style="left:818.50px;top:55.62px;font-size:11.5px;color:#1e1e1e;">-</div>
<div class="t" style="left:829.00px;top:55.62px;font-size:11.5px;color:#1e1e1e;transform:scaleX(1.0431);transform-origin:0 0;">Microsoft ...</div>
<div class="a" style="left:936px;top:61.5px;width:11px;height:1px;background:#222;"></div>
<div class="a" style="left:981px;top:57px;width:10px;height:10px;background:transparent;border:1px solid #222;"></div>
<svg class="a" style="left:1026px;top:56px;" width="12" height="12" viewBox="0 0 12 12"><path d="M1 1 L11 11 M11 1 L1 11" stroke="#222" stroke-width="1"/></svg>
<div class="a" style="left:495px;top:99px;width:560px;height:1px;background:#a9afb8;"></div>
<div class="a" style="left:495px;top:76px;width:56px;height:24px;background:linear-gradient(#3c78d6,#2456b6);border-radius:3px 3px 0 0;"></div>
<div class="t" style="left:514.50px;top:82.62px;font-size:11.5px;color:#ffffff;">File</div>
<div class="a" style="left:556px;top:76px;width:52px;height:24px;background:#ffffff;border:1px solid #b9bec7;border-bottom:none;border-radius:3px 3px 0 0;"></div>
<div class="t" style="left:567.80px;top:82.84px;font-size:11.3px;color:#3c3c3c;">Home</div>
<div class="t" style="left:622.00px;top:82.84px;font-size:11.3px;color:#3c3c3c;">Insert</div>
<div class="t" style="left:676.40px;top:82.84px;font-size:11.3px;color:#3c3c3c;">Page Layout</div>
<div class="t" style="left:763.00px;top:82.84px;font-size:11.3px;color:#3c3c3c;">References</div>
<div class="t" style="left:844.30px;top:82.84px;font-size:11.3px;color:#3c3c3c;">Mailings</div>
<div class="t" style="left:913.30px;top:82.84px;font-size:11.3px;color:#3c3c3c;">Review</div>
<div class="t" style="left:974.20px;top:82.84px;font-size:11.3px;color:#3c3c3c;">View</div>
<svg class="a" style="left:1017px;top:83.5px;" width="11" height="8.5" viewBox="0 0 11 8.5"><path d="M1.1 5.3 L5.5 0.9 L9.9 5.3 Q10.5 6.9 8.9 7.1 Q8.1 7.1 5.5 4.4 Q2.9 7.1 2.1 7.1 Q0.5 6.9 1.1 5.3Z" fill="#fff" stroke="#222" stroke-width="1.1" stroke-linejoin="round"/></svg>
<svg class="a" style="left:1036px;top:79px;" width="17" height="17" viewBox="0 0 17 17"><defs><radialGradient id="hg" cx="0.4" cy="0.3" r="0.7"><stop offset="0" stop-color="#8fb6f0"/><stop offset="1" stop-color="#2f64c0"/></radialGradient></defs><circle cx="8.5" cy="8.5" r="8" fill="url(#hg)" stroke="#2a58a8" stroke-width="0.8"/><text x="8.5" y="13" text-anchor="middle" font-family="Liberation Sans" font-weight="bold" font-size="12" fill="#fff">?</text></svg>
<div class="a" style="left:495px;top:100px;width:543px;height:85px;background:linear-gradient(#ffffff 0%,#fbfbfc 55%,#eceef2 100%);"></div>
<div class="a" style="left:1038px;top:100px;width:17px;height:85px;background:linear-gradient(#ffffff 0%,#fbfbfc 55%,#eceef2 100%);"></div>
<div class="a" style="left:495px;top:185px;width:560px;height:7px;background:linear-gradient(#a3a9b2,#c4c9d0 40%,#cdd1d8);"></div>
<div class="a" style="left:571px;top:102px;width:1px;height:82px;background:linear-gradient(rgba(210,214,222,0.2),#d3d7de 30%,#cfd3da);"></div>
<div class="a" style="left:765px;top:102px;width:1px;height:82px;background:linear-gradient(rgba(210,214,222,0.2),#d3d7de 30%,#cfd3da);"></div>
<div class="a" style="left:825.6px;top:102px;width:1px;height:82px;background:linear-gradient(rgba(210,214,222,0.2),#d3d7de 30%,#cfd3da);"></div>
<div class="a" style="left:869.4px;top:102px;width:1px;height:82px;background:linear-gradient(rgba(210,214,222,0.2),#d3d7de 30%,#cfd3da);"></div>
<div class="a" style="left:913.3px;top:102px;width:1px;height:82px;background:linear-gradient(rgba(210,214,222,0.2),#d3d7de 30%,#cfd3da);"></div>
<div class="a" style="left:1000.4px;top:102px;width:1px;height:82px;background:linear-gradient(rgba(210,214,222,0.2),#d3d7de 30%,#cfd3da);"></div>
<svg class="a" style="left:508px;top:104px;" width="28" height="32" viewBox="0 0 28 32"><rect x="1" y="3" width="19" height="25" rx="1.5" fill="#e9b75a" stroke="#c89a40" stroke-width="0.8"/><rect x="6" y="1" width="9" height="4" rx="1" fill="#f7f7f7" stroke="#888" stroke-width="0.8"/><path d="M9 12 H25 L27 14 V30 H9Z" fill="#fbfbfb" stroke="#8c8c8c" stroke-width="0.8"/><path d="M12 17 H23 M12 20 H23 M12 23 H23 M12 26 H21" stroke="#b0b0b0" stroke-width="0.8"/></svg>
<div class="t" style="left:508.00px;top:142.44px;font-size:11.3px;color:#333;">Paste</div>
<svg class="a" style="left:518.5px;top:155.5px;" width="6" height="3" viewBox="0 0 6 3"><path d="M0 0 H6 L3.0 3Z" fill="#555"/></svg>
<svg class="a" style="left:548px;top:106px;" width="11" height="14" viewBox="0 0 11 14"><path d="M2 1 L8 10 M9 1 L3 10" stroke="#9a9a9a" stroke-width="1.3"/><circle cx="2.8" cy="11.5" r="2" fill="none" stroke="#8a8a8a" stroke-width="1.1"/><circle cx="8.2" cy="11.5" r="2" fill="none" stroke="#8a8a8a" stroke-width="1.1"/></svg>
<svg class="a" style="left:546px;top:127px;" width="15" height="14" viewBox="0 0 15 14"><path d="M1 1 H6 L8 3 V10 H1Z" fill="#f4f4f4" stroke="#9a9a9a" stroke-width="0.9"/><path d="M6 4 H11 L13 6 V13 H6Z" fill="#f4f4f4" stroke="#9a9a9a" stroke-width="0.9"/></svg>
<svg class="a" style="left:546px;top:149px;" width="16" height="15" viewBox="0 0 16 15"><path d="M9 7 L14 1.5 L15.5 3 L10.5 8.5Z" fill="#5a3fa0"/><path d="M1 12 L7 5 L11 9 L5 15 Q2 15 1 12Z" fill="#e3d27a" stroke="#9a8a3a" stroke-width="0.8"/></svg>
<div class="t" style="left:498.60px;top:171.64px;font-size:11.3px;color:#5e5e5e;">Clipboard</div>
<svg class="a" style="left:559px;top:174px;" width="8" height="8" viewBox="0 0 8 8"><path d="M0.5 0.5 H4 M0.5 0.5 V4 M3 3 L7 7 M7 4 V7 H4" stroke="#8a8a8a" stroke-width="0.9" fill="none"/></svg>
<div class="a" style="left:577px;top:102.5px;width:142px;height:21px;background:#ffffff;border:1px solid #c6cad2;"></div>
<div class="a" style="left:719px;top:102.5px;width:42px;height:21px;background:#ffffff;border:1px solid #c6cad2;"></div>
<div class="t" style="left:580.20px;top:107.66px;font-size:11.2px;color:#1e1e1e;">Calibri (Body)</div>
<svg class="a" style="left:709px;top:111.5px;" width="5" height="3" viewBox="0 0 5 3"><path d="M0 0 H5 L2.5 3Z" fill="#666"/></svg>
<div class="t" style="left:722.50px;top:107.66px;font-size:11.2px;color:#1e1e1e;">12</div>
<svg class="a" style="left:752px;top:111.5px;" width="5" height="3" viewBox="0 0 5 3"><path d="M0 0 H5 L2.5 3Z" fill="#666"/></svg>
<div class="a" style="left:577px;top:124.5px;width:23px;height:21px;background:linear-gradient(#fde08e,#f7c85a);border:1px solid #d8a43c;border-radius:3px;"></div>
<div class="t" style="left:583.00px;top:128.56px;font-size:12px;color:#111;font-weight:bold;font-family:'Liberation Serif';">B</div>
<div class="t" style="left:607.00px;top:127.94px;font-size:13px;color:#222;font-weight:bold;font-family:'Liberation Serif';font-style:italic;transform:skewX(-12deg);">I</div>
<div class="t" style="left:631.00px;top:128.56px;font-size:12px;color:#222;font-weight:bold;font-family:'Liberation Serif';text-decoration:underline;">U</div>
<svg class="a" style="left:650px;top:132.5px;" width="5" height="3" viewBox="0 0 5 3"><path d="M0 0 H5 L2.5 3Z" fill="#666"/></svg>
<div class="t" style="left:663.00px;top:129.24px;font-size:10.5px;color:#444;font-weight:bold;font-family:'Liberation Serif';text-decoration:line-through;">abc</div>
<div class="t" style="left:688.50px;top:129.06px;font-size:12px;color:#222;font-weight:bold;">x</div>
<div class="t" style="left:697.00px;top:136.78px;font-size:6px;color:#2b57a8;font-weight:bold;">2</div>
<div class="t" style="left:712.00px;top:129.06px;font-size:12px;color:#222;font-weight:bold;">x</div>
<div class="t" style="left:720.50px;top:126.78px;font-size:6px;color:#2b57a8;font-weight:bold;">2</div>
<div class="a" style="left:733px;top:128px;width:1px;height:15px;background:#d3d7de;"></div>
<svg class="a" style="left:742px;top:127px;" width="17" height="17" viewBox="0 0 17 17"><rect x="1" y="1" width="11" height="8" fill="#f5f8fc" stroke="#6a8ac0" stroke-width="0.8"/><text x="2.5" y="7.5" font-family="Liberation Sans" font-size="6" fill="#333">Aa</text><path d="M8 13 L13 8 Q15.5 8 16 10.5 L11 15.5 Q8.5 15.5 8 13Z" fill="#f0f0f0" stroke="#8a8a8a" stroke-width="0.9"/></svg>
<div class="t" style="left:581.00px;top:148.08px;font-size:16px;color:#bcdcf7;font-weight:bold;-webkit-text-stroke:1px #6aa8e0;">A</div>
<svg class="a" style="left:599px;top:156px;" width="5" height="3" viewBox="0 0 5 3"><path d="M0 0 H5 L2.5 3Z" fill="#666"/></svg>
<div class="t" style="left:612.00px;top:148.30px;font-size:10px;color:#222;background:#f1f16a;">ab</div>
<svg class="a" style="left:621px;top:151px;" width="9" height="9" viewBox="0 0 9 9"><path d="M1 8 L7.5 1.5 L8.5 2.5 L2 9Z" fill="#7aa0d8" stroke="#445" stroke-width="0.6"/></svg>
<div class="a" style="left:612px;top:161px;width:16px;height:3px;background:#f4f21c;"></div>
<svg class="a" style="left:634.5px;top:156px;" width="5" height="3" viewBox="0 0 5 3"><path d="M0 0 H5 L2.5 3Z" fill="#666"/></svg>
<div class="t" style="left:650.50px;top:148.32px;font-size:14px;color:#263e80;font-weight:bold;font-family:'Liberation Serif';">A</div>
<div class="a" style="left:647px;top:161px;width:16px;height:3.5px;background:#e21d1d;"></div>
<svg class="a" style="left:669.5px;top:156px;" width="5" height="3" viewBox="0 0 5 3"><path d="M0 0 H5 L2.5 3Z" fill="#666"/></svg>
<div class="t" style="left:682.00px;top:149.44px;font-size:13px;color:#222;font-weight:bold;font-family:'Liberation Serif';letter-spacing:-1px;">Aa</div>
<svg class="a" style="left:700px;top:156px;" width="4.5" height="3" viewBox="0 0 4.5 3"><path d="M0 0 H4.5 L2.25 3Z" fill="#666"/></svg>
<div class="a" style="left:712.5px;top:148px;width:1px;height:19px;background:#d3d7de;"></div>
<div class="t" style="left:722.50px;top:149.32px;font-size:14px;color:#222;font-weight:bold;font-family:'Liberation Serif';">A</div>
<svg class="a" style="left:732px;top:150px;" width="5" height="3" viewBox="0 0 5 3"><path d="M0 3 H5 L2.5 0Z" fill="#3a64b0"/></svg>
<div class="t" style="left:745.00px;top:153.80px;font-size:10px;color:#222;font-weight:bold;font-family:'Liberation Serif';">A</div>
<svg class="a" style="left:752.5px;top:150px;" width="5" height="3" viewBox="0 0 5 3"><path d="M0 0 H5 L2.5 3Z" fill="#3a64b0"/></svg>
<div class="t" style="left:647.00px;top:171.34px;font-size:11.3px;color:#5e5e5e;">Font</div>
<svg class="a" style="left:753px;top:174px;" width="8" height="8" viewBox="0 0 8 8"><path d="M0.5 0.5 H4 M0.5 0.5 V4 M3 3 L7 7 M7 4 V7 H4" stroke="#8a8a8a" stroke-width="0.9" fill="none"/></svg>
<div class="a" style="left:781.7px;top:103.3px;width:30px;height:30px;background:linear-gradient(#ffffff,#f6f7f9);border:1px solid #d0d4da;border-radius:3px;"></div>
<div class="a" style="left:833px;top:103.3px;width:30px;height:30px;background:linear-gradient(#ffffff,#f6f7f9);border:1px solid #d0d4da;border-radius:3px;"></div>
<div class="a" style="left:877px;top:103.3px;width:30px;height:30px;background:linear-gradient(#ffffff,#f6f7f9);border:1px solid #d0d4da;border-radius:3px;"></div>
<svg class="a" style="left:790px;top:112px;" width="14" height="13" viewBox="0 0 14 13"><rect x="0" y="0.80" width="14" height="1.05" fill="#111"/><rect x="2.3" y="2.84" width="9.5" height="1.05" fill="#111"/><rect x="0" y="4.88" width="14" height="1.05" fill="#111"/><rect x="2.3" y="6.92" width="9.5" height="1.05" fill="#111"/><rect x="0" y="8.96" width="14" height="1.05" fill="#111"/><rect x="2.3" y="11.00" width="9.5" height="1.05" fill="#111"/></svg>
<div class="t" style="left:771.00px;top:139.64px;font-size:11.3px;color:#333;">Paragraph</div>
<svg class="a" style="left:793.5px;top:155.5px;" width="6" height="3" viewBox="0 0 6 3"><path d="M0 0 H6 L3.0 3Z" fill="#666"/></svg>
<div class="t" style="left:840.50px;top:108.78px;font-size:21px;color:#34488a;font-family:'Liberation Serif';transform:scaleX(1.0546);transform-origin:0 0;">A</div>
<svg class="a" style="left:847px;top:114px;" width="12" height="13" viewBox="0 0 12 13"><path d="M1 12 C2 9 5 7 9 4 L10.5 5.5 C8 9 5 11.5 1 12Z" fill="#8ea2e6" stroke="#3a4a8a" stroke-width="0.7"/><path d="M9 4 L11.5 0.5 L11.8 3 L10.5 5.5Z" fill="#d8e030"/></svg>
<div class="t" style="left:834.80px;top:139.64px;font-size:11.3px;color:#333;">Styles</div>
<svg class="a" style="left:845px;top:155.5px;" width="6" height="3" viewBox="0 0 6 3"><path d="M0 0 H6 L3.0 3Z" fill="#666"/></svg>
<svg class="a" style="left:885px;top:111.5px;" width="15" height="14" viewBox="0 0 15 14"><defs><linearGradient id="bg1" x1="0" y1="0" x2="0" y2="1"><stop offset="0" stop-color="#3a4f98"/><stop offset="1" stop-color="#8fa3dc"/></linearGradient></defs><path d="M1.8 0.3 H4.4 V2.6 H5.4 V6 H6.4 V13.4 H0.4 V6 H1 V2.6 H1.8Z" fill="url(#bg1)" stroke="#2e3e7a" stroke-width="0.6"/><path d="M10.6 0.3 H13.2 V2.6 H14 V6 H14.6 V13.4 H8.6 V6 H9.6 V2.6 H10.6Z" fill="url(#bg1)" stroke="#2e3e7a" stroke-width="0.6"/><rect x="6.2" y="6" width="2.6" height="2.8" fill="#3a4f98"/><rect x="1.2" y="9.5" width="2" height="3" fill="#dfe6f8"/><rect x="9.4" y="9.5" width="2" height="3" fill="#dfe6f8"/></svg>
<div class="t" style="left:874.50px;top:139.64px;font-size:11.3px;color:#333;">Editing</div>
<svg class="a" style="left:889.5px;top:155.5px;" width="6" height="3" viewBox="0 0 6 3"><path d="M0 0 H6 L3.0 3Z" fill="#666"/></svg>
<svg class="a" style="left:941px;top:104px;" width="33" height="28" viewBox="0 0 33 28"><defs><linearGradient id="mg" x1="0" y1="1" x2="1" y2="0"><stop offset="0" stop-color="#1a3ed8"/><stop offset="0.5" stop-color="#1da6d8"/><stop offset="1" stop-color="#27c24a"/></linearGradient></defs><path d="M0 28 L20 0 H32 L12 28Z" fill="url(#mg)"/></svg>
<div class="t" style="left:937.70px;top:141.62px;font-size:11.5px;color:#333;">Manual</div>
<div class="t" style="left:923.00px;top:154.32px;font-size:11.5px;color:#333;">Classification</div>
<div class="t" style="left:918.60px;top:171.32px;font-size:11.5px;color:#5e5e5e;">Data Protection</div>
<div class="a" style="left:495px;top:192px;width:543px;height:350px;background:#ffffff;"></div>
<div class="a" style="left:495px;top:192px;width:4px;height:350px;background:#d0d4d9;"></div>
<div class="a" style="left:1038px;top:192px;width:17px;height:350px;background:#dfe3e9;border-left:1px solid #c9ced5;"></div>
<div class="a" style="left:1042px;top:191px;width:10px;height:1.2px;background:#7a7a7a;"></div>
<svg class="a" style="left:1040px;top:196px;" width="13" height="13" viewBox="0 0 13 13"><rect x="0.5" y="0.5" width="7" height="7" fill="#fafafa" stroke="#777" stroke-width="0.8"/><rect x="4.5" y="4.5" width="8" height="8" fill="#fafafa" stroke="#777" stroke-width="0.8"/><path d="M7 11 L9 7 L11 11" fill="none" stroke="#777" stroke-width="0.7"/></svg>
<div class="a" style="left:1038px;top:212px;width:17px;height:1px;background:#c9ced5;"></div>
<svg class="a" style="left:1042px;top:218px;" width="9" height="5" viewBox="0 0 9 5"><path d="M0 5 H9 L4.5 0Z" fill="#555"/></svg>
<div class="a" style="left:1038.5px;top:275px;width:16px;height:18px;background:linear-gradient(90deg,#fdfdfd,#e6e9ee);border:1px solid #9ea4ad;border-radius:1px;"></div>
<svg class="a" style="left:1042px;top:280px;" width="9" height="8" viewBox="0 0 9 8"><rect x="0" y="0" width="9" height="0.9" fill="#777"/><rect x="0" y="2" width="9" height="0.9" fill="#777"/><rect x="0" y="4" width="9" height="0.9" fill="#777"/><rect x="0" y="6" width="9" height="0.9" fill="#777"/></svg>
<svg class="a" style="left:1042px;top:480px;" width="9" height="5" viewBox="0 0 9 5"><path d="M0 0 H9 L4.5 5Z" fill="#555"/></svg>
<div class="a" style="left:1038px;top:490px;width:17px;height:1px;background:#c9ced5;"></div>
<svg class="a" style="left:1043px;top:494px;" width="8" height="8" viewBox="0 0 8 8"><path d="M0 4 L4 0 L8 4Z M0 8 L4 4 L8 8Z" fill="#444"/></svg>
<svg class="a" style="left:1042px;top:511px;" width="9" height="9" viewBox="0 0 9 9"><circle cx="4.5" cy="4.5" r="3.8" fill="#e9e9e9" stroke="#777" stroke-width="0.9"/></svg>
<svg class="a" style="left:1043px;top:529px;" width="8" height="8" viewBox="0 0 8 8"><path d="M0 0 L4 4 L8 0Z M0 4 L4 8 L8 4Z" fill="#444"/></svg>
<div class="a" style="left:495px;top:542px;width:543px;height:17px;background:#e3e6eb;border-top:1px solid #c9ced5;"></div>
<svg class="a" style="left:499px;top:546px;" width="6" height="9" viewBox="0 0 6 9"><path d="M6 0 V9 L0 4.5Z" fill="#555"/></svg>
<div class="a" style="left:563px;top:542px;width:397px;height:16.5px;background:linear-gradient(#fbfbfc,#e4e7ec);border:1px solid #9ea4ad;border-radius:2px;"></div>
<svg class="a" style="left:756px;top:546px;" width="9" height="9" viewBox="0 0 9 9"><rect x="0" y="0" width="0.9" height="9" fill="#777"/><rect x="2" y="0" width="0.9" height="9" fill="#777"/><rect x="4" y="0" width="0.9" height="9" fill="#777"/><rect x="6" y="0" width="0.9" height="9" fill="#777"/></svg>
<svg class="a" style="left:1026px;top:546px;" width="6" height="9" viewBox="0 0 6 9"><path d="M0 0 V9 L6 4.5Z" fill="#555"/></svg>
<div class="a" style="left:1038px;top:542px;width:17px;height:17px;background:#e3e6eb;border-left:1px solid #c9ced5;"></div>
<div class="a" style="left:495px;top:559px;width:560px;height:22px;background:linear-gradient(#f3f4f6,#e1e4e9);border-top:1px solid #c4c9d0;"></div>
<div class="t" style="left:503.20px;top:564.34px;font-size:11.3px;color:#3a3a3a;">Page: 11 of 52</div>
<div class="a" style="left:584.5px;top:561px;width:1px;height:18px;background:#c0c5cc;"></div>
<div class="t" style="left:594.00px;top:564.34px;font-size:11.3px;color:#3a3a3a;">Words: 4,070</div>
<div class="a" style="left:670px;top:561px;width:1px;height:18px;background:#c0c5cc;"></div>
<svg class="a" style="left:678px;top:562px;" width="19" height="16" viewBox="0 0 19 16"><path d="M1 11 Q5 8 9.5 10 Q14 8 18 11 L10 15 Z" fill="#f4f6fa" stroke="#35608f" stroke-width="0.9"/><path d="M1 11 L10 15 L18 11" fill="none" stroke="#3a70c0" stroke-width="1.4"/><path d="M9.5 2.5 L15.5 8.5 M15.5 2.5 L9.5 8.5" stroke="#e02020" stroke-width="1.8"/></svg>
<div class="a" style="left:705px;top:561px;width:1px;height:18px;background:#c0c5cc;"></div>
<div class="a" style="left:768.5px;top:561px;width:1px;height:18px;background:#c0c5cc;"></div>
<div class="a" style="left:773px;top:561px;width:19px;height:19px;background:linear-gradient(#fde49a,#f8cf68);border:1px solid #dfae4a;border-radius:2px;"></div>
<svg class="a" style="left:777px;top:565px;" width="11" height="11" viewBox="0 0 11 11"><rect x="0.5" y="0.5" width="10" height="10" fill="#fff" stroke="#333" stroke-width="0.9"/><rect x="2" y="2.5" width="7" height="0.9" fill="#333"/><rect x="2" y="4.5" width="7" height="0.9" fill="#333"/><rect x="2" y="6.5" width="7" height="0.9" fill="#333"/><rect x="2" y="8.5" width="7" height="0.9" fill="#333"/></svg>
<svg class="a" style="left:796px;top:565px;" width="12" height="11" viewBox="0 0 12 11"><path d="M0.5 1 H5.5 L6 2 L6.5 1 H11.5 V9.5 H0.5Z" fill="#fff" stroke="#444" stroke-width="0.9"/><path d="M6 2 V9.5" stroke="#444" stroke-width="0.8"/><path d="M2 3.5 H4.5 M2 5.5 H4.5 M7.5 3.5 H10 M7.5 5.5 H10" stroke="#666" stroke-width="0.7"/></svg>
<svg class="a" style="left:813px;top:564px;" width="13" height="13" viewBox="0 0 13 13"><rect x="0.5" y="0.5" width="10" height="9" fill="#fff" stroke="#444" stroke-width="0.9"/><path d="M2 3 H8 M2 5 H8" stroke="#666" stroke-width="0.7"/><circle cx="9" cy="9.5" r="3.3" fill="#2d8ac8"/></svg>
<svg class="a" style="left:832px;top:565px;" width="11" height="11" viewBox="0 0 11 11"><path d="M0 1 H2 M4 1 H11 M2 4 H4 M6 4 H11 M2 7 H4 M6 7 H11 M0 10 H2 M4 10 H11" stroke="#555" stroke-width="0.9"/></svg>
<svg class="a" style="left:850px;top:565px;" width="12" height="11" viewBox="0 0 12 11"><rect x="0" y="0.0" width="12" height="1" fill="#555"/><rect x="0" y="2.2" width="12" height="1" fill="#555"/><rect x="0" y="4.4" width="12" height="1" fill="#555"/><rect x="0" y="6.6000000000000005" width="12" height="1" fill="#555"/><rect x="0" y="8.8" width="12" height="1" fill="#555"/></svg>
<div class="t" style="left:875.30px;top:564.75px;font-size:10.4px;color:#3a3a3a;">80%</div>
<svg class="a" style="left:903px;top:561px;" width="18" height="18" viewBox="0 0 18 18"><circle cx="9" cy="9" r="7.8" fill="#fbfbfb" stroke="#8e939a" stroke-width="0.9"/><rect x="5" y="8" width="8" height="2" fill="#444"/></svg>
<div class="a" style="left:920px;top:569.5px;width:100px;height:1px;background:#9ba0a7;"></div>
<div class="a" style="left:969.5px;top:566px;width:1px;height:7px;background:#9ba0a7;"></div>
<svg class="a" style="left:955px;top:563px;" width="11" height="13" viewBox="0 0 11 13"><path d="M0.5 0.5 H10.5 V8 L5.5 12.5 L0.5 8Z" fill="#fbfbfb" stroke="#7d828a" stroke-width="0.9"/></svg>
<svg class="a" style="left:1019px;top:561px;" width="18" height="18" viewBox="0 0 18 18"><circle cx="9" cy="9" r="7.8" fill="#fbfbfb" stroke="#8e939a" stroke-width="0.9"/><rect x="5" y="8" width="8" height="2" fill="#444"/><rect x="8" y="5" width="2" height="8" fill="#444"/></svg>
<svg class="a" style="left:1043px;top:569px;" width="11" height="11" viewBox="0 0 11 11"><rect x="8" y="0" width="2" height="2" fill="#b8bdc4"/><rect x="5" y="3" width="2" height="2" fill="#b8bdc4"/><rect x="8" y="3" width="2" height="2" fill="#b8bdc4"/><rect x="2" y="6" width="2" height="2" fill="#b8bdc4"/><rect x="5" y="6" width="2" height="2" fill="#b8bdc4"/><rect x="8" y="6" width="2" height="2" fill="#b8bdc4"/></svg>
<div class="a" style="left:0;top:0;width:1038px;height:542px;overflow:hidden;clip-path:inset(192px 0 0 499px)"><div class="t" style="left:523.00px;top:196.11px;font-size:11.6px;color:#2f4262;transform:scaleX(1.0119);transform-origin:0 0;">TP:&nbsp; 62.80-62.60</div>
<div class="t" style="left:523.00px;top:243.03px;font-size:11.4px;color:#203d6c;font-weight:bold;transform:scaleX(0.9914);transform-origin:0 0;">*NGAS-FUT Technicals*</div>
<div class="t" style="left:523.00px;top:259.11px;font-size:11.6px;color:#2f4262;transform:scaleX(1.0108);transform-origin:0 0;">Rate: 4.453</div>
<div class="t" style="left:523.00px;top:274.61px;font-size:11.6px;color:#2f4262;transform:scaleX(1.0176);transform-origin:0 0;">Range: 4.300-4.570</div>
<div class="t" style="left:523.00px;top:290.41px;font-size:11.6px;color:#2f4262;transform:scaleX(0.9577);transform-origin:0 0;">Trend: NEUTRAL</div>
<div class="t" style="left:523.00px;top:306.01px;font-size:11.6px;color:#2f4262;transform:scaleX(1.0096);transform-origin:0 0;">Strategy</div>
<div class="t" style="left:523.00px;top:321.61px;font-size:11.6px;color:#2f4262;transform:scaleX(0.9609);transform-origin:0 0;">SHORT-SELL: 4.500-4.569</div>
<div class="t" style="left:523.00px;top:337.31px;font-size:11.6px;color:#2f4262;transform:scaleX(0.9669);transform-origin:0 0;">SL: 4.581</div>
<div class="t" style="left:523.00px;top:352.91px;font-size:11.6px;color:#2f4262;transform:scaleX(1.0119);transform-origin:0 0;">TP:&nbsp; 4.385-3.365</div>
<div class="t" style="left:523.00px;top:384.03px;font-size:11.4px;color:#203d6c;font-weight:bold;transform:scaleX(0.9766);transform-origin:0 0;">*CRUDE-FUT Technicals*</div>
<div class="t" style="left:523.00px;top:400.11px;font-size:11.6px;color:#2f4262;transform:scaleX(1.0158);transform-origin:0 0;">Rate: 60.00</div>
<div class="t" style="left:523.00px;top:415.21px;font-size:11.6px;color:#2f4262;transform:scaleX(1.0205);transform-origin:0 0;">Range: 57.80-61.50</div>
<div class="t" style="left:523.00px;top:430.51px;font-size:11.6px;color:#2f4262;transform:scaleX(0.9484);transform-origin:0 0;">Trend: BEARISH</div>
<div class="t" style="left:523.00px;top:446.91px;font-size:11.6px;color:#2f4262;transform:scaleX(1.0096);transform-origin:0 0;">Strategy</div>
<div class="t" style="left:523.00px;top:462.51px;font-size:11.6px;color:#2f4262;transform:scaleX(0.9566);transform-origin:0 0;">SHORT-SELL: 60.60-61.45</div>
<div class="t" style="left:523.00px;top:477.61px;font-size:11.6px;color:#2f4262;transform:scaleX(0.9669);transform-origin:0 0;">SL: 61.61</div>
<div class="t" style="left:523.00px;top:493.91px;font-size:11.6px;color:#2f4262;transform:scaleX(1.0119);transform-origin:0 0;">TP:&nbsp; 58.40-58.00</div>
<div class="t" style="left:523.00px;top:524.63px;font-size:11.4px;color:#203d6c;font-weight:bold;transform:scaleX(0.9669);transform-origin:0 0;">*EUR-USD-FUT Technicals*</div>
<svg class="a" style="left:612px;top:292px;" width="8.5" height="8" viewBox="0 0 8.5 8"><path d="M0 0 H8.5 L4.25 8Z" fill="#111"/></svg>
<svg class="a" style="left:625.5px;top:292px;" width="8.5" height="8" viewBox="0 0 8.5 8"><path d="M0 0 H8.5 L4.25 8Z" fill="#111"/></svg>
<svg class="a" style="left:639px;top:292px;" width="8.5" height="8" viewBox="0 0 8.5 8"><path d="M0 0 H8.5 L4.25 8Z" fill="#111"/></svg>
<svg class="a" style="left:608.5px;top:432.5px;" width="8.5" height="8" viewBox="0 0 8.5 8"><path d="M0 0 H8.5 L4.25 8Z" fill="#111"/></svg>
<svg class="a" style="left:621.5px;top:432.5px;" width="8.5" height="8" viewBox="0 0 8.5 8"><path d="M0 0 H8.5 L4.25 8Z" fill="#111"/></svg>
<svg class="a" style="left:634.5px;top:432.5px;" width="8.5" height="8" viewBox="0 0 8.5 8"><path d="M0 0 H8.5 L4.25 8Z" fill="#111"/></svg>
<svg class="a" style="left:565.5px;top:253.5px;" width="26" height="3" viewBox="0 0 26 3"><path d="M0 2 L1.5 0.3 L3.0 2.2 L4.5 0.3 L6.0 2.2 L7.5 0.3 L9.0 2.2 L10.5 0.3 L12.0 2.2 L13.5 0.3 L15.0 2.2 L16.5 0.3 L18.0 2.2 L19.5 0.3 L21.0 2.2 L22.5 0.3 L24.0 2.2 L25.5 0.3" stroke="#3aa83a" stroke-width="0.95" fill="none"/></svg>
<svg class="a" style="left:592px;top:253.5px;" width="54" height="3" viewBox="0 0 54 3"><path d="M0 2 L1.5 0.3 L3.0 2.2 L4.5 0.3 L6.0 2.2 L7.5 0.3 L9.0 2.2 L10.5 0.3 L12.0 2.2 L13.5 0.3 L15.0 2.2 L16.5 0.3 L18.0 2.2 L19.5 0.3 L21.0 2.2 L22.5 0.3 L24.0 2.2 L25.5 0.3 L27.0 2.2 L28.5 0.3 L30.0 2.2 L31.5 0.3 L33.0 2.2 L34.5 0.3 L36.0 2.2 L37.5 0.3 L39.0 2.2 L40.5 0.3 L42.0 2.2 L43.5 0.3 L45.0 2.2 L46.5 0.3 L48.0 2.2 L49.5 0.3 L51.0 2.2 L52.5 0.3 L54.0 2.2" stroke="#e02020" stroke-width="0.95" fill="none"/></svg>
<svg class="a" style="left:590px;top:394.5px;" width="12" height="3" viewBox="0 0 12 3"><path d="M0 2 L1.5 0.3 L3.0 2.2 L4.5 0.3 L6.0 2.2 L7.5 0.3 L9.0 2.2 L10.5 0.3 L12.0 2.2" stroke="#3aa83a" stroke-width="0.95" fill="none"/></svg>
<svg class="a" style="left:600px;top:394.5px;" width="51" height="3" viewBox="0 0 51 3"><path d="M0 2 L1.5 0.3 L3.0 2.2 L4.5 0.3 L6.0 2.2 L7.5 0.3 L9.0 2.2 L10.5 0.3 L12.0 2.2 L13.5 0.3 L15.0 2.2 L16.5 0.3 L18.0 2.2 L19.5 0.3 L21.0 2.2 L22.5 0.3 L24.0 2.2 L25.5 0.3 L27.0 2.2 L28.5 0.3 L30.0 2.2 L31.5 0.3 L33.0 2.2 L34.5 0.3 L36.0 2.2 L37.5 0.3 L39.0 2.2 L40.5 0.3 L42.0 2.2 L43.5 0.3 L45.0 2.2 L46.5 0.3 L48.0 2.2 L49.5 0.3 L51.0 2.2" stroke="#e02020" stroke-width="0.95" fill="none"/></svg>
<svg class="a" style="left:605.7px;top:535.5px;" width="55" height="3" viewBox="0 0 55 3"><path d="M0 2 L1.5 0.3 L3.0 2.2 L4.5 0.3 L6.0 2.2 L7.5 0.3 L9.0 2.2 L10.5 0.3 L12.0 2.2 L13.5 0.3 L15.0 2.2 L16.5 0.3 L18.0 2.2 L19.5 0.3 L21.0 2.2 L22.5 0.3 L24.0 2.2 L25.5 0.3 L27.0 2.2 L28.5 0.3 L30.0 2.2 L31.5 0.3 L33.0 2.2 L34.5 0.3 L36.0 2.2 L37.5 0.3 L39.0 2.2 L40.5 0.3 L42.0 2.2 L43.5 0.3 L45.0 2.2 L46.5 0.3 L48.0 2.2 L49.5 0.3 L51.0 2.2 L52.5 0.3 L54.0 2.2" stroke="#e02020" stroke-width="0.95" fill="none"/></svg>
<div class="a" style="left:602.5px;top:383px;width:1.2px;height:15px;background:#000;"></div>
</div>
<div class="a" style="left:0px;top:728px;width:1366px;height:40px;background:#0a0e15;"></div>
<svg class="a" style="left:16px;top:740px;" width="16" height="16" viewBox="0 0 16 16"><path d="M0 2.2 L6.6 1.3 V7.5 H0Z M7.5 1.2 L16 0 V7.5 H7.5Z M0 8.5 H6.6 V14.7 L0 13.8Z M7.5 8.5 H16 V16 L7.5 14.8Z" fill="#ffffff"/></svg>
<div class="a" style="left:48px;top:728px;width:344px;height:40px;background:#f0f0f0;"></div>
<svg class="a" style="left:57px;top:737px;" width="22" height="22" viewBox="0 0 22 22"><circle cx="11" cy="11" r="9" fill="none" stroke="#000" stroke-width="3"/><circle cx="11" cy="11" r="10.4" fill="none" stroke="#888" stroke-width="0.5"/></svg>
<div class="t" style="left:88.70px;top:741.77px;font-size:14.4px;color:#3b3b3b;">Type here to search</div>
<svg class="a" style="left:365px;top:740px;" width="14" height="18" viewBox="0 0 14 18"><rect x="4" y="1" width="6" height="10" rx="3" fill="none" stroke="#333" stroke-width="1.2"/><path d="M1.5 8 Q1.5 13.5 7 13.5 Q12.5 13.5 12.5 8 M7 13.5 V16.5 M4 16.5 H10" fill="none" stroke="#333" stroke-width="1.2"/></svg>
<svg class="a" style="left:406px;top:736px;" width="25" height="24" viewBox="0 0 25 24"><defs><linearGradient id="eg1" x1="0" y1="1" x2="1" y2="0"><stop offset="0" stop-color="#1a60c0"/><stop offset="0.6" stop-color="#2f9be0"/><stop offset="1" stop-color="#52d27a"/></linearGradient></defs><path d="M12 1 C19 1 24 6 24 11.5 C24 15 21.5 17 18 17 C14.5 17 12.5 15.5 13 13 C13.5 11 15.5 10.5 16.5 11 C15 7.5 11.5 6 8 7 C3.5 8.5 2 13 3 17 C4.5 21 8.5 23.5 13 23.5 C7 24.5 1 20 1 12.5 C1 6 6 1 12 1Z" fill="url(#eg1)"/><path d="M3 17 C4.5 21 8.5 23.5 13 23.5 C17 23.5 20.5 21.5 22 19 C19 20.5 15 20 12.5 17.5 C10.5 15.5 10.5 12 13 10 C9 10 5.5 12.5 3 17Z" fill="#1b56b8"/></svg>
<div class="a" style="left:456px;top:736px;width:24px;height:24px;background:#ffd500;"></div>
<div class="t" style="left:457.50px;top:745.84px;font-size:5.5px;color:#3a3000;font-weight:bold;">exness</div>
<svg class="a" style="left:505px;top:737px;" width="24" height="21" viewBox="0 0 24 21"><path d="M1 2 H8 L10 4 H22 V18 H1Z" fill="#e9b94e"/><path d="M1 5 H22 V19 H1Z" fill="#f7d67a"/><path d="M6 12 H17 V20 H14 V15 H9 V20 H6Z" fill="#2f8edc"/></svg>
<svg class="a" style="left:553px;top:735px;" width="26" height="25" viewBox="0 0 26 25"><ellipse cx="13" cy="6" rx="6" ry="5.5" fill="#4a8fd8"/><ellipse cx="6" cy="17" rx="6" ry="6" fill="#82b84a"/><ellipse cx="20" cy="17" rx="6" ry="6" fill="#a6c84a"/><ellipse cx="13" cy="20" rx="7" ry="4.5" fill="#c8d860"/><circle cx="13" cy="13.5" r="6" fill="#f2c55a"/><circle cx="13" cy="13.5" r="3.5" fill="#fff3d0"/><circle cx="13" cy="13.5" r="1.8" fill="#e8a030"/></svg>
<svg class="a" style="left:602px;top:735px;" width="28" height="28" viewBox="0 0 28 28"><rect x="1" y="2" width="20" height="20" rx="1.5" fill="#f5c050"/><circle cx="8.5" cy="11" r="5.5" fill="none" stroke="#e07a10" stroke-width="3"/><circle cx="17" cy="9" r="3.5" fill="#f8e0c0" stroke="#d06030" stroke-width="1"/><rect x="10" y="14" width="16" height="12" fill="#f4dc8a" stroke="#c8a040" stroke-width="0.8"/><path d="M10 14 L18 21 L26 14" fill="none" stroke="#b08a30" stroke-width="0.8"/></svg>
<svg class="a" style="left:651px;top:735px;" width="25" height="25" viewBox="0 0 25 25"><circle cx="12.5" cy="12.5" r="12" fill="#2fa84f"/><path d="M12.5 0.5 A12 12 0 0 1 22.9 6.5 L12.5 6.5 A6 6 0 0 0 7.3 9.5 L2.1 6.5 A12 12 0 0 1 12.5 0.5Z" fill="#e33b2e"/><path d="M22.9 6.5 A12 12 0 0 1 12.5 24.5 L17.7 15.5 A6 6 0 0 0 17.7 9.5Z" fill="#fbc02d"/><circle cx="12.5" cy="12.5" r="5.6" fill="#fff"/><circle cx="12.5" cy="12.5" r="4.5" fill="#3d7ee6"/></svg>
<div class="a" style="left:701px;top:736px;width:24px;height:24px;background:#1f1f1f;border-radius:2px;"></div>
<div class="t" style="left:704.00px;top:742.80px;font-size:10px;color:#ffffff;font-weight:bold;font-style:italic;letter-spacing:-0.5px;">XM</div>
<svg class="a" style="left:702px;top:743px;" width="4" height="8" viewBox="0 0 4 8"><path d="M4 0 L0 4 L4 8Z" fill="#d22"/></svg>
<div class="a" style="left:738px;top:728px;width:48px;height:40px;background:#3b3d41;"></div>
<svg class="a" style="left:749px;top:736px;" width="25" height="23" viewBox="0 0 25 23"><rect x="1" y="1" width="20" height="20" fill="#eaf1fb"/><rect x="1" y="1" width="20" height="20" fill="none" stroke="#9fb8e0"/><text x="11" y="16.5" text-anchor="middle" font-family="Liberation Serif" font-weight="bold" font-size="16" fill="#1f5fc2">W</text><path d="M16 13 L24 15 L21 22 L13 20Z" fill="#fff" stroke="#aab" stroke-width="0.6"/></svg>
<div class="a" style="left:448px;top:766px;width:40px;height:2px;background:#78b4e8;"></div>
<div class="a" style="left:546px;top:766px;width:40px;height:2px;background:#78b4e8;"></div>
<div class="a" style="left:595px;top:766px;width:40px;height:2px;background:#78b4e8;"></div>
<div class="a" style="left:644px;top:766px;width:31px;height:2px;background:#78b4e8;"></div>
<div class="a" style="left:677px;top:766px;width:7px;height:2px;background:#78b4e8;"></div>
<div class="a" style="left:738px;top:766px;width:48px;height:2px;background:#78b4e8;"></div>
<svg class="a" style="left:1158px;top:743px;" width="14" height="9" viewBox="0 0 14 9"><path d="M1 8 L7 2 L13 8" fill="none" stroke="#fff" stroke-width="1.3"/></svg>
<svg class="a" style="left:1183px;top:742px;" width="15" height="14" viewBox="0 0 15 14"><path d="M1.5 12.5 A11.5 11.5 0 0 1 13 1" fill="none" stroke="#fff" stroke-width="1.2"/><path d="M4.5 12.5 A8.5 8.5 0 0 1 13 4" fill="none" stroke="#fff" stroke-width="1.2"/><path d="M7.5 12.5 A5.5 5.5 0 0 1 13 7" fill="none" stroke="#fff" stroke-width="1.2"/><circle cx="12.5" cy="12.5" r="1.4" fill="#fff"/></svg>
<svg class="a" style="left:1204px;top:741px;" width="18" height="13" viewBox="0 0 18 13"><path d="M2 2 V5 M5 2 V5 M0.5 5 H6.5 V7 Q6.5 9 3.5 9 Q0.5 9 0.5 7Z M3.5 9 V12" fill="none" stroke="#fff" stroke-width="1.1"/><rect x="6" y="3.5" width="10" height="7.5" fill="none" stroke="#fff" stroke-width="1.1"/><rect x="7.5" y="5" width="6.5" height="4.5" fill="#fff"/><rect x="16" y="5.5" width="1.5" height="3.5" fill="#fff"/></svg>
<svg class="a" style="left:1228px;top:742px;" width="18" height="13" viewBox="0 0 18 13"><path d="M1 4.5 H4 L8 1 V12 L4 8.5 H1Z" fill="none" stroke="#fff" stroke-width="1.1"/><path d="M10 4.5 Q11.5 6.5 10 8.5 M12 2.5 Q15 6.5 12 10.5 M14 0.8 Q18.5 6.5 14 12.2" fill="none" stroke="#fff" stroke-width="1.1"/></svg>
<div class="t" style="left:1260.50px;top:732.86px;font-size:11.2px;color:#ffffff;">7:05 PM</div>
<div class="t" style="left:1252.40px;top:750.62px;font-size:11.5px;color:#ffffff;">11/17/2025</div>
<svg class="a" style="left:1324px;top:739px;" width="18" height="17" viewBox="0 0 18 17"><path d="M0.8 0.8 H16.8 V12 H10.5 L8.8 14.8 L7 12 H0.8Z" fill="none" stroke="#fff" stroke-width="1.2"/></svg>
<div class="a" style="left:1361px;top:728px;width:1px;height:40px;background:#555a60;"></div>
</body></html>
